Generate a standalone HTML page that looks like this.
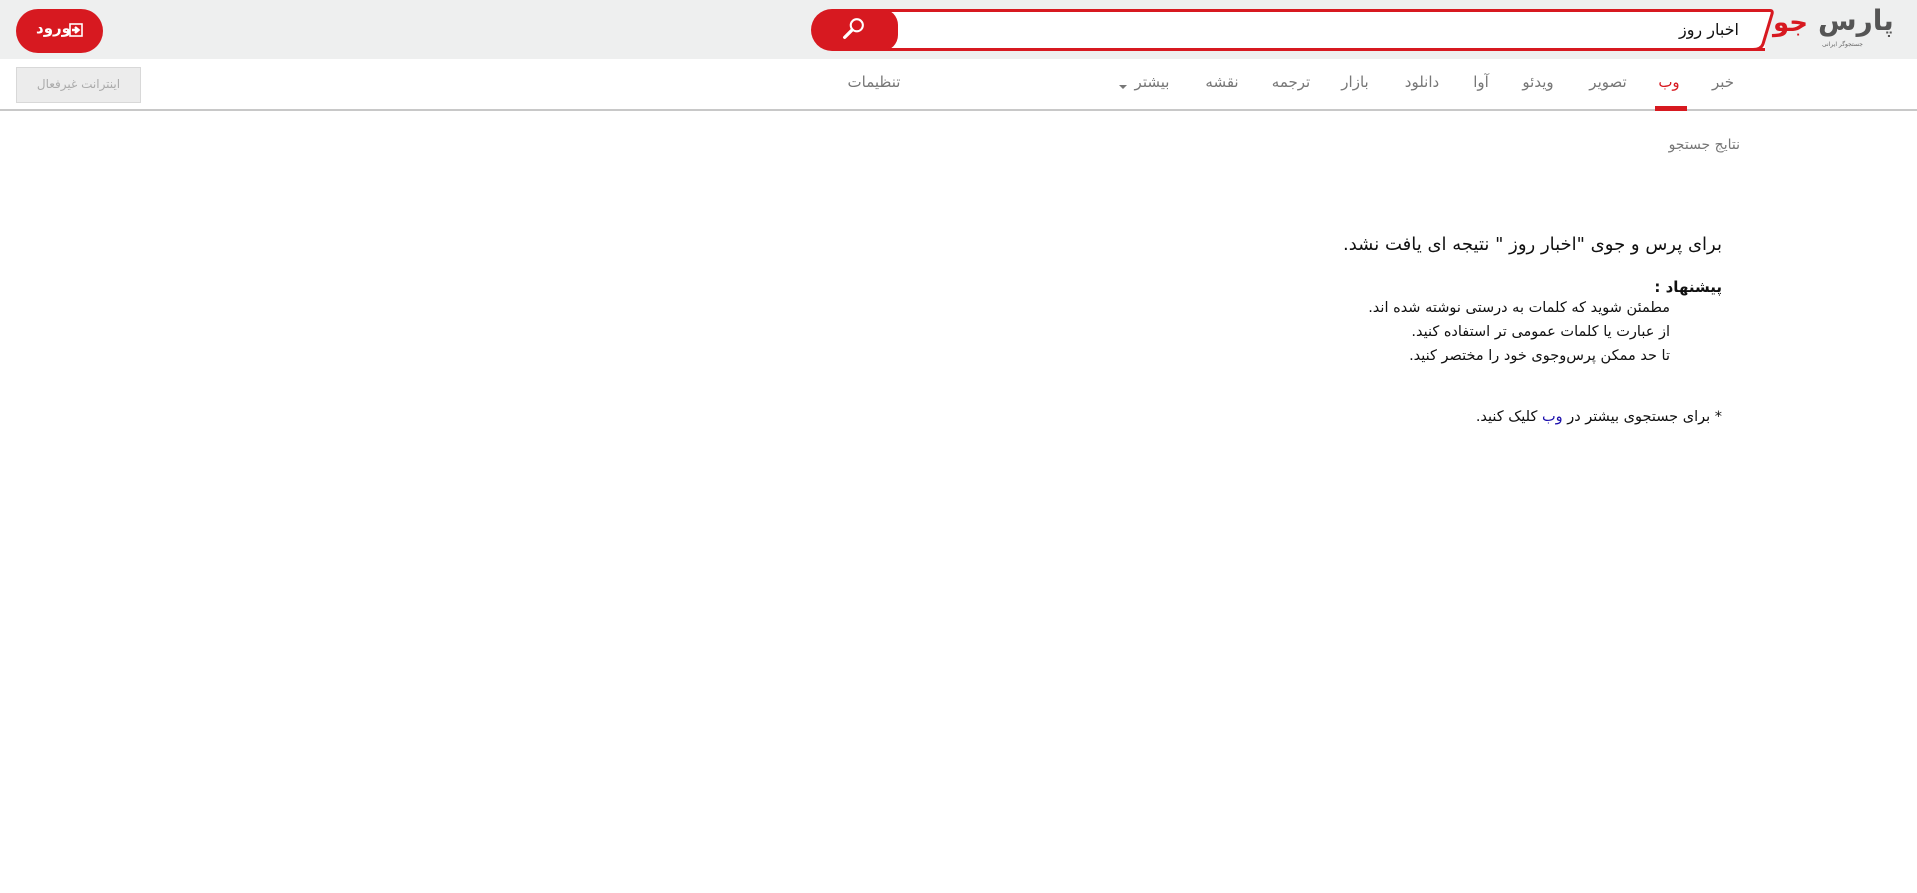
<!DOCTYPE html>
<html lang="fa">
<head>
<meta charset="utf-8">
<style>
*{margin:0;padding:0;box-sizing:border-box}
html,body{width:1917px;height:893px;background:#fff;overflow:hidden;font-family:"DejaVu Sans","Liberation Sans",sans-serif}
.hdr{position:absolute;left:0;top:0;width:1917px;height:59px;background:#eeefef}
.nav{position:absolute;left:0;top:59px;width:1917px;height:52px;border-bottom:2px solid #c8c8c8;background:#fff}
.abs{position:absolute;white-space:nowrap;direction:rtl}
.ni{position:absolute;top:73px;font-size:15px;color:#777;white-space:nowrap;direction:rtl;transform:translateX(-50%)}
.txt{color:#111;direction:rtl}
</style>
</head>
<body>
<div class="hdr"></div>
<div style="position:absolute;left:870px;top:9px;width:895px;height:42px;border:3px solid #d71920;border-right:none;background:#fff"></div>
<svg style="position:absolute;left:1745px;top:8px" width="30" height="44"><path d="M0 2.5 H25 Q28 2.5 27 6 L18 36 Q16 41.5 8 41.5 H0" fill="#fff" stroke="#d71920" stroke-width="3"/></svg>
<div class="abs" style="right:178px;top:20px;font-size:16px;color:#111">اخبار روز</div>
<div style="position:absolute;left:811px;top:9px;width:87px;height:42px;background:#d71920;border-radius:21px 16px 16px 21px"></div>
<svg style="position:absolute;left:840px;top:15px" width="28" height="28" viewBox="0 0 30 30"><circle cx="18" cy="11" r="6.5" fill="none" stroke="#fff" stroke-width="2.2"/><path d="M13 16 L5 24" stroke="#fff" stroke-width="3.5" stroke-linecap="round"/></svg>
<div class="abs" style="left:1773px;top:8px;font-size:26px;font-weight:bold;color:#d71920;letter-spacing:-2px">جو</div>
<div class="abs" style="left:1818px;top:4px;font-size:28px;font-weight:bold;color:#555;letter-spacing:-2px">پارس</div>
<div class="abs" style="left:1822px;top:41px;font-size:6px;color:#666">جستجوگر ایرانی</div>
<div style="position:absolute;left:16px;top:9px;width:87px;height:44px;background:#d71920;border-radius:22px"></div>
<div class="abs" style="left:36px;top:19px;font-size:15px;font-weight:bold;color:#fff">ورود</div>
<svg style="position:absolute;left:69px;top:23px" width="14" height="14" viewBox="0 0 14 14"><rect x="1" y="1" width="12" height="12" fill="none" stroke="#fff" stroke-width="1.6"/><path d="M3 7 H8 M6 4 L9.5 7 L6 10" stroke="#fff" stroke-width="2.4" fill="none"/></svg>

<div class="nav"></div>
<div class="ni" style="left:1723px">خبر</div>
<div class="ni" style="left:1669px;color:#d71920">وب</div>
<div style="position:absolute;left:1655px;top:106px;width:32px;height:5px;background:#d71920"></div>
<div class="ni" style="left:1608px">تصویر</div>
<div class="ni" style="left:1538px">ویدئو</div>
<div class="ni" style="left:1481px">آوا</div>
<div class="ni" style="left:1422px">دانلود</div>
<div class="ni" style="left:1355px">بازار</div>
<div class="ni" style="left:1291px">ترجمه</div>
<div class="ni" style="left:1222px">نقشه</div>
<div class="ni" style="left:1152px">بیشتر</div>
<div style="position:absolute;left:1119px;top:85px;width:0;height:0;border-left:4px solid transparent;border-right:4px solid transparent;border-top:4px solid #777"></div>
<div class="ni" style="left:874px">تنظیمات</div>
<div style="position:absolute;left:16px;top:67px;width:125px;height:36px;background:#ececec;border:1px solid #d8d8d8"></div>
<div class="abs" style="left:16px;width:125px;text-align:center;top:77px;font-size:12px;color:#aaa">اینترانت غیرفعال</div>

<div class="abs" style="right:177px;top:137px;font-size:14px;color:#777">نتایج جستجو</div>
<div class="abs txt" style="right:195px;top:234px;font-size:18px">برای پرس و جوی "اخبار روز " نتیجه ای یافت نشد.</div>
<div class="abs txt" style="right:195px;top:278px;font-size:15px;font-weight:bold">پیشنهاد :</div>
<div class="abs txt" style="right:247px;top:300px;font-size:14.5px">مطمئن شوید که کلمات به درستی نوشته شده اند.</div>
<div class="abs txt" style="right:247px;top:324px;font-size:14.5px">از عبارت یا کلمات عمومی تر استفاده کنید.</div>
<div class="abs txt" style="right:247px;top:348px;font-size:14.5px">تا حد ممکن پرس‌وجوی خود را مختصر کنید.</div>
<div class="abs txt" style="right:195px;top:409px;font-size:14.5px">* برای جستجوی بیشتر در <span style="color:#1a0dab">وب</span> کلیک کنید.</div>
</body>
</html>
